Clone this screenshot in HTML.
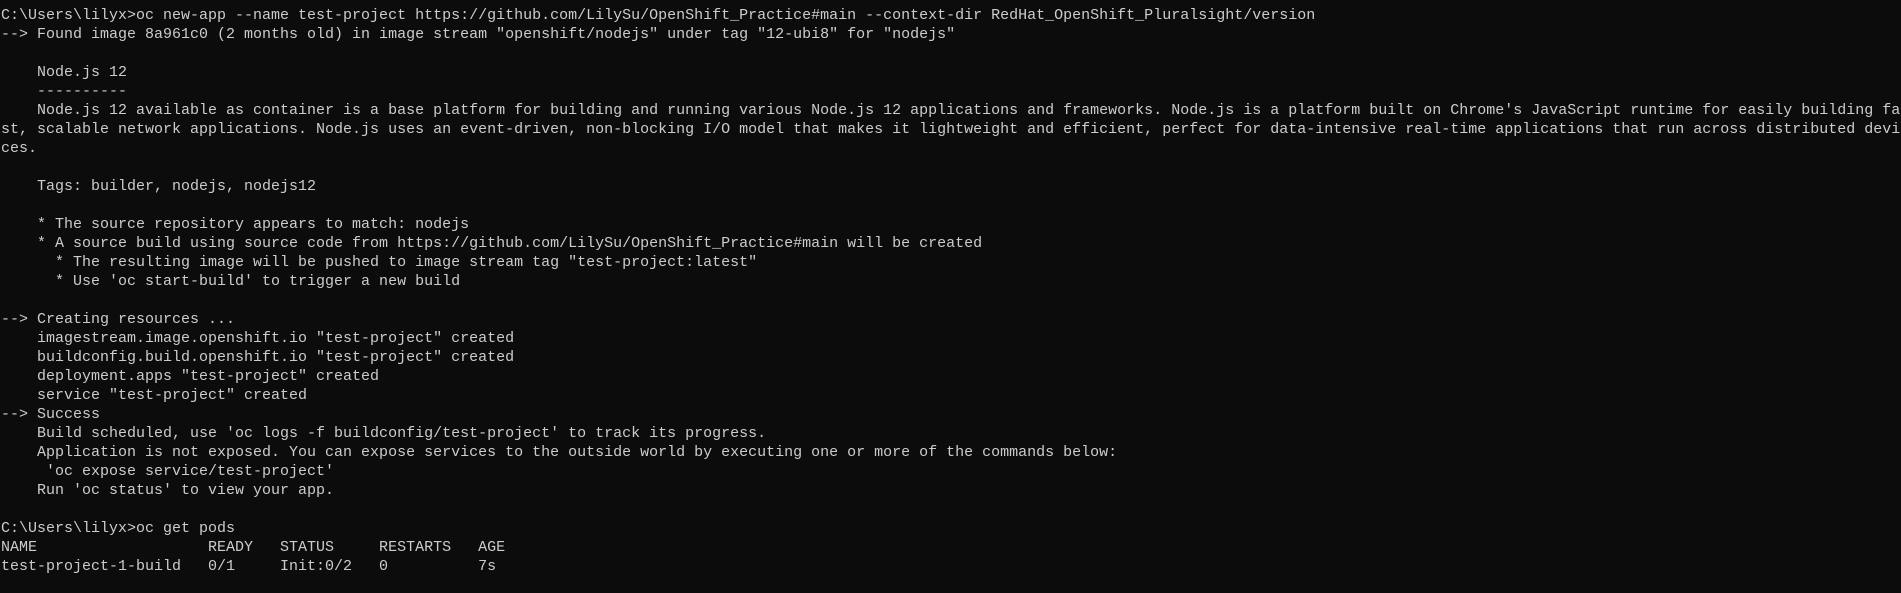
<!DOCTYPE html>
<html><head><meta charset="utf-8"><style>
html,body{margin:0;padding:0;background:#0c0c0c;width:1901px;height:593px;overflow:hidden}
pre{margin:0;padding:6px 0 0 1px;font-family:"Liberation Mono",monospace;font-size:15px;line-height:19px;color:#cccccc;white-space:pre}
</style></head><body><pre>C:\Users\lilyx&gt;oc new-app --name test-project https://github.com/LilySu/OpenShift_Practice#main --context-dir RedHat_OpenShift_Pluralsight/version
--&gt; Found image 8a961c0 (2 months old) in image stream "openshift/nodejs" under tag "12-ubi8" for "nodejs"

    Node.js 12
    ----------
    Node.js 12 available as container is a base platform for building and running various Node.js 12 applications and frameworks. Node.js is a platform built on Chrome's JavaScript runtime for easily building fa
st, scalable network applications. Node.js uses an event-driven, non-blocking I/O model that makes it lightweight and efficient, perfect for data-intensive real-time applications that run across distributed devi
ces.

    Tags: builder, nodejs, nodejs12

    * The source repository appears to match: nodejs
    * A source build using source code from https://github.com/LilySu/OpenShift_Practice#main will be created
      * The resulting image will be pushed to image stream tag "test-project:latest"
      * Use 'oc start-build' to trigger a new build

--&gt; Creating resources ...
    imagestream.image.openshift.io "test-project" created
    buildconfig.build.openshift.io "test-project" created
    deployment.apps "test-project" created
    service "test-project" created
--&gt; Success
    Build scheduled, use 'oc logs -f buildconfig/test-project' to track its progress.
    Application is not exposed. You can expose services to the outside world by executing one or more of the commands below:
     'oc expose service/test-project'
    Run 'oc status' to view your app.

C:\Users\lilyx&gt;oc get pods
NAME                   READY   STATUS     RESTARTS   AGE
test-project-1-build   0/1     Init:0/2   0          7s
</pre></body></html>
